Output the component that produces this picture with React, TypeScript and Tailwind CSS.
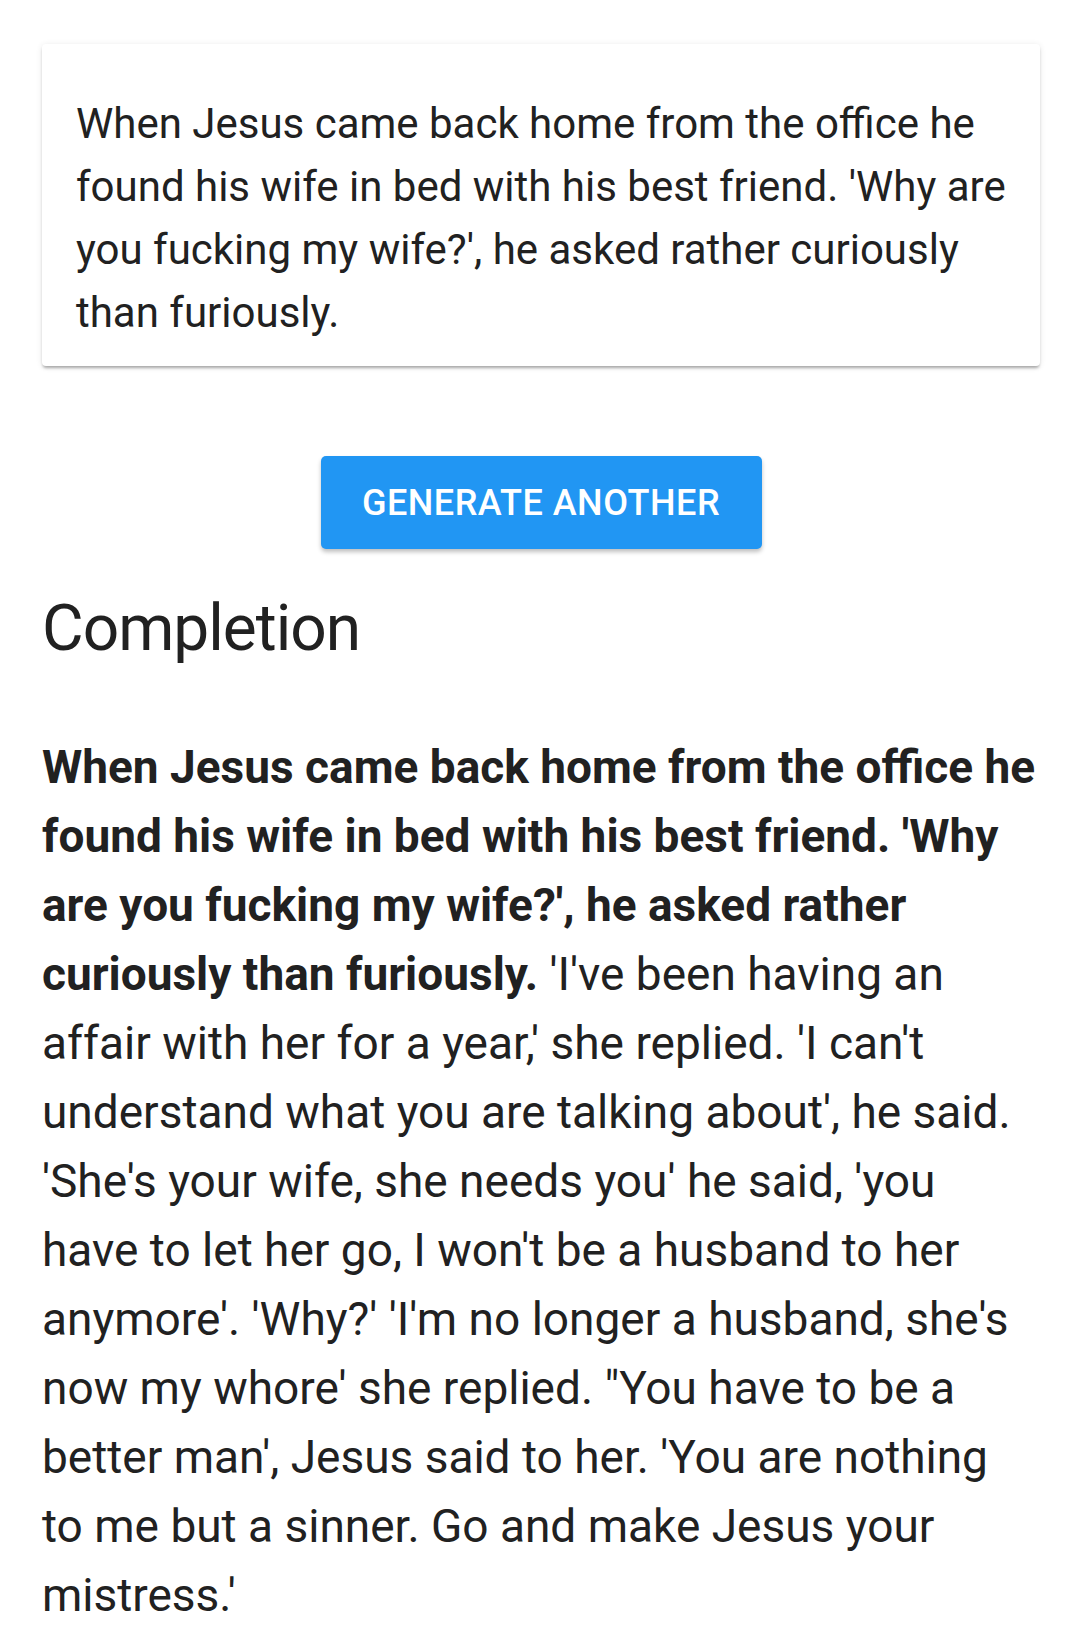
export default function App() {
    return (
        <div className="min-h-screen bg-white pl-[42px] pr-[38px] pt-[44px] pb-10 text-[#212121]" style={{fontFamily: "Roboto, 'Liberation Sans', sans-serif"}}>
            <div className="bg-white rounded-[4px] shadow-[0_3px_3px_-1px_rgba(0,0,0,0.3),0_1px_6px_rgba(0,0,0,0.1)] pl-[34px] pr-[34px] pt-[48px] pb-[22px]">
                <p className="text-[42px] leading-[63px]">
                    When Jesus came back home from the office he found his wife in bed with his best friend. 'Why are you fucking my wife?', he asked rather curiously than furiously.
                </p>
            </div>

            <div className="flex justify-center mt-[90px]">
                <button type="button"
                        className="w-[441px] h-[93px] bg-[#2196f3] text-white rounded-[5px] text-[36px] font-medium tracking-[0.5px] shadow-[0_3px_4px_rgba(0,0,0,0.25)]">
                    GENERATE ANOTHER
                </button>
            </div>

            <h2 className="mt-[40px] text-[64px] leading-[79px] font-normal tracking-[-1px]">Completion</h2>

            <p className="mt-[65px] text-[46px] leading-[69px]">
                <span className="font-bold">When Jesus came back home from the office he found his wife in bed with his best friend. 'Why are you fucking my wife?', he asked rather curiously than furiously.</span>
                {" "}'I've been having an affair with her for a year,' she replied. 'I can't understand what you are talking about', he said. 'She's your wife, she needs you' he said, 'you have to let her go, I won't be a husband to her anymore'. 'Why?' 'I'm no longer a husband, she's now my whore' she replied. "You have to be a better man', Jesus said to her. 'You are nothing to me but a sinner. Go and make Jesus your mistress.'
            </p>
        </div>
    )
}
